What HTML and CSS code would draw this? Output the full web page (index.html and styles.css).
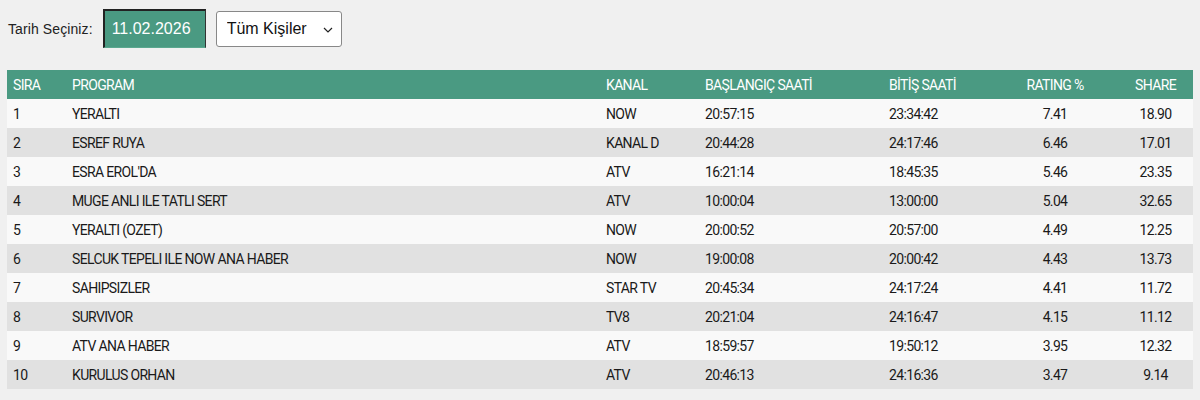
FILE: index.html
```html
<!DOCTYPE html>
<html lang="tr">
<head>
<meta charset="utf-8">
<title>Reyting</title>
<link rel="stylesheet" href="styles.css">
</head>
<body>
<div class="filters">
  <label class="filter-label" for="tarih">Tarih Seçiniz:</label>
  <input id="tarih" class="date-input" type="text" value="11.02.2026">
  <div class="select-wrap">
    <select class="people-select">
      <option>Tüm Kişiler</option>
    </select>
    <svg class="chev" width="10" height="6" viewBox="0 0 10 6"><path d="M1 1 L5 5 L9 1" fill="none" stroke="#222" stroke-width="1.2"/></svg>
  </div>
</div>
<table class="ratings">
  <thead>
    <tr>
      <th class="c-sira">SIRA</th>
      <th class="c-prog">PROGRAM</th>
      <th class="c-kanal">KANAL</th>
      <th class="c-bas">BAŞLANGIÇ SAATİ</th>
      <th class="c-bit">BİTİŞ SAATİ</th>
      <th class="c-num c-rat">RATING %</th>
      <th class="c-num c-share">SHARE</th>
    </tr>
  </thead>
  <tbody>
    <tr><td>1</td><td>YERALTI</td><td>NOW</td><td>20:57:15</td><td>23:34:42</td><td class="c-num">7.41</td><td class="c-num">18.90</td></tr>
    <tr><td>2</td><td>ESREF RUYA</td><td>KANAL D</td><td>20:44:28</td><td>24:17:46</td><td class="c-num">6.46</td><td class="c-num">17.01</td></tr>
    <tr><td>3</td><td>ESRA EROL'DA</td><td>ATV</td><td>16:21:14</td><td>18:45:35</td><td class="c-num">5.46</td><td class="c-num">23.35</td></tr>
    <tr><td>4</td><td>MUGE ANLI ILE TATLI SERT</td><td>ATV</td><td>10:00:04</td><td>13:00:00</td><td class="c-num">5.04</td><td class="c-num">32.65</td></tr>
    <tr><td>5</td><td>YERALTI (OZET)</td><td>NOW</td><td>20:00:52</td><td>20:57:00</td><td class="c-num">4.49</td><td class="c-num">12.25</td></tr>
    <tr><td>6</td><td>SELCUK TEPELI ILE NOW ANA HABER</td><td>NOW</td><td>19:00:08</td><td>20:00:42</td><td class="c-num">4.43</td><td class="c-num">13.73</td></tr>
    <tr><td>7</td><td>SAHIPSIZLER</td><td>STAR TV</td><td>20:45:34</td><td>24:17:24</td><td class="c-num">4.41</td><td class="c-num">11.72</td></tr>
    <tr><td>8</td><td>SURVIVOR</td><td>TV8</td><td>20:21:04</td><td>24:16:47</td><td class="c-num">4.15</td><td class="c-num">11.12</td></tr>
    <tr><td>9</td><td>ATV ANA HABER</td><td>ATV</td><td>18:59:57</td><td>19:50:12</td><td class="c-num">3.95</td><td class="c-num">12.32</td></tr>
    <tr><td>10</td><td>KURULUS ORHAN</td><td>ATV</td><td>20:46:13</td><td>24:16:36</td><td class="c-num">3.47</td><td class="c-num">9.14</td></tr>
  </tbody>
</table>
</body>
</html>
```
FILE: styles.css
```css
html, body {
  margin: 0;
  padding: 0;
  background: #f0f0f0;
}
body {
  padding: 9px 7px 0 7px;
  font-family: "Liberation Sans", Arial, sans-serif;
  color: #222;
}
.filters {
  display: flex;
  align-items: center;
  height: 39px;
}
.filter-label {
  font-size: 14px;
  margin-left: 1px;
  margin-right: 10px;
  color: #222;
  letter-spacing: 0.1px;
}
.date-input {
  box-sizing: border-box;
  width: 103px;
  height: 39px;
  background: #4a9a82;
  color: #fff;
  font-family: "Liberation Sans", Arial, sans-serif;
  font-size: 16px;
  padding: 0 0 0 7px;
  border-style: solid;
  border-width: 2px 1px 1px 2px;
  border-color: #222 #333 #5aa88f #222;
  outline: none;
  margin: 0;
}
.select-wrap {
  position: relative;
  margin-left: 10px;
}
.people-select {
  -webkit-appearance: none;
  appearance: none;
  box-sizing: border-box;
  width: 126px;
  height: 36px;
  background: #fff;
  border: 1px solid #888;
  border-radius: 3px;
  font-family: "Liberation Sans", Arial, sans-serif;
  font-size: 16px;
  color: #111;
  padding: 0 0 0 10px;
  margin: 0;
  display: block;
}
.chev {
  position: absolute;
  right: 9px;
  top: 16px;
  pointer-events: none;
}
.ratings {
  margin-top: 22px;
  width: 1186px;
  border-collapse: collapse;
  font-family: Roboto, "Liberation Sans", sans-serif;
  font-size: 14px;
  letter-spacing: -0.65px;
  color: #1a1a1a;
}
.ratings th {
  background: #4a9a82;
  color: #fff;
  font-weight: 400;
  text-align: left;
  height: 29px;
  padding: 0 0 0 6px;
}
.ratings td {
  height: 29px;
  padding: 0 0 0 6px;
  text-align: left;
}
.ratings tbody tr:nth-child(odd) td {
  background: #f9f9f9;
}
.ratings tbody tr:nth-child(even) td {
  background: #e1e1e1;
}
.ratings .c-sira { width: 53px; }
.ratings .c-prog { width: 528px; }
.ratings .c-kanal { width: 93px; }
.ratings .c-bas { width: 178px; }
.ratings .c-bit { width: 103px; }
.ratings .c-rat { width: 126px; }
.ratings .c-num {
  text-align: center;
  padding: 0;
}
```
